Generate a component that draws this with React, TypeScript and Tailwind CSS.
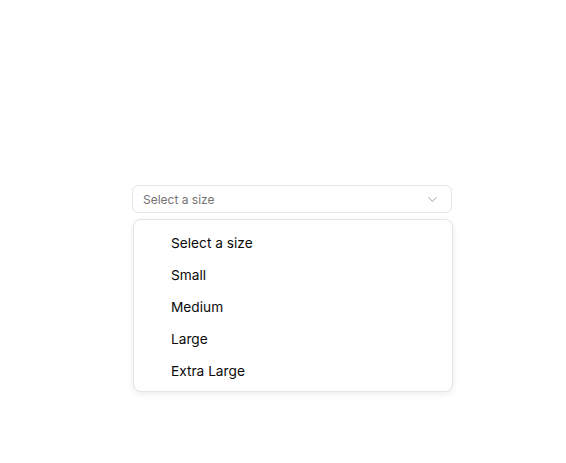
const sizes = ["Select a size", "Small", "Medium", "Large", "Extra Large"];

export default function App() {
    return (
        <div
            className="min-h-[463px] bg-white pt-[185px] pl-[132px]"
            style={{ fontFamily: "Inter, 'Noto Sans', sans-serif" }}
        >
            <button className="flex h-[28px] w-[320px] items-center justify-between rounded-md border border-neutral-200 bg-white pl-[10px] pr-[11px] pt-px text-left text-[12px] text-neutral-500">
                <span>Select a size</span>
                <svg
                    width="15"
                    height="15"
                    viewBox="0 0 24 24"
                    fill="none"
                    stroke="#a3a3a3"
                    strokeWidth="1.6"
                    strokeLinecap="round"
                    strokeLinejoin="round"
                >
                    <path d="m6 9 6 6 6-6" />
                </svg>
            </button>
            <div className="ml-px mt-[6px] w-[320px] rounded-lg border border-neutral-200 bg-white pt-[7px] pb-[4px] shadow-[0_2px_6px_rgba(0,0,0,0.08)]">
                {sizes.map((s) => (
                    <div
                        key={s}
                        className="flex h-[32px] items-center pl-[37px] text-[13.7px] text-neutral-950"
                    >
                        {s}
                    </div>
                ))}
            </div>
        </div>
    );
}
